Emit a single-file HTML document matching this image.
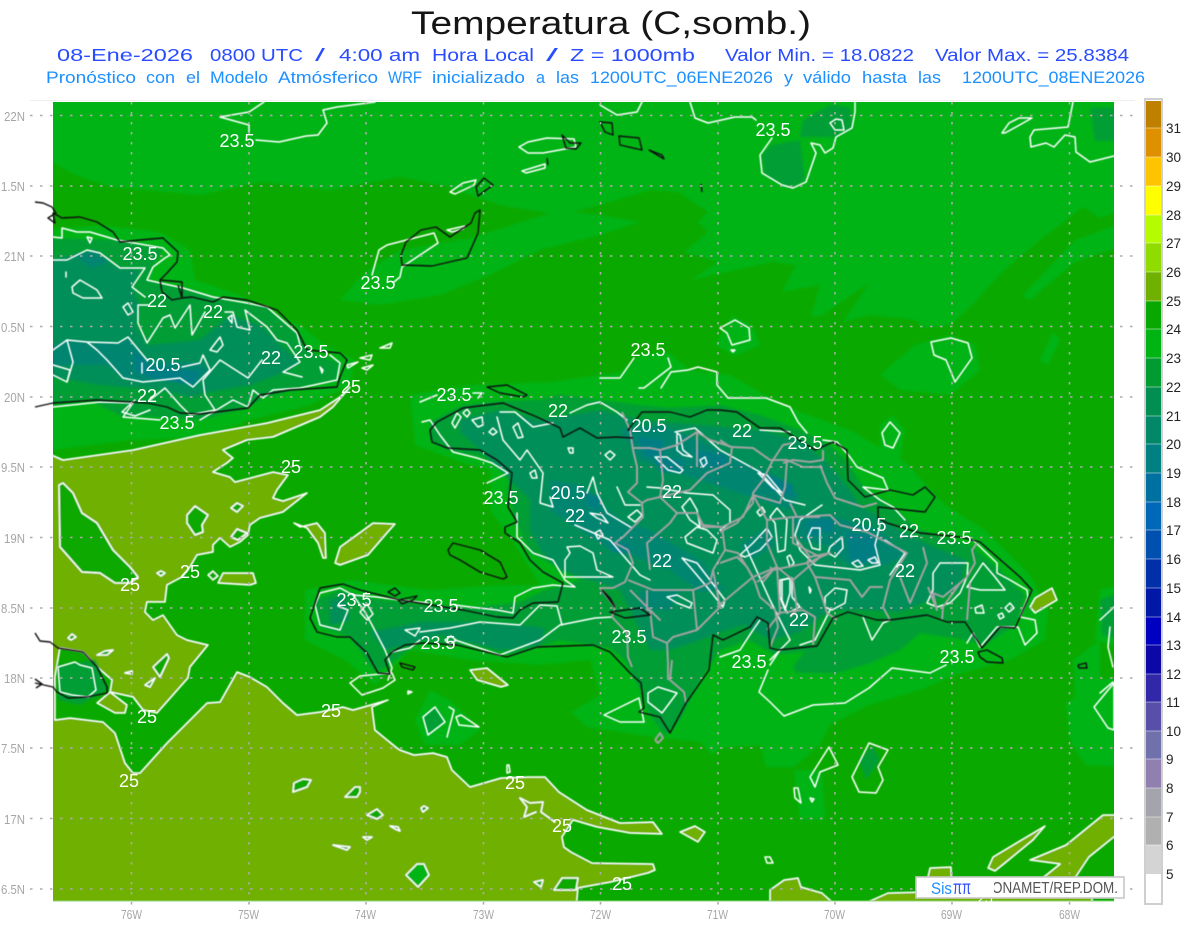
<!DOCTYPE html>
<html><head><meta charset="utf-8"><title>Temperatura</title>
<style>
html,body{margin:0;padding:0;background:#fff}
svg{display:block}
text{font-family:"Liberation Sans",sans-serif}
.w,.w polyline,.w polygon{fill:none;stroke:#fff;stroke-width:1.5;stroke-linejoin:round;stroke-linecap:round}
.k polyline,.k polygon{fill:none;stroke:#111;stroke-width:1.4;stroke-linejoin:round}
.g polyline{fill:none;stroke:#a2a2a2;stroke-width:2;stroke-linejoin:round}
.gn polygon{fill:#00b414;stroke:none}
.d1 polygon{fill:#009e36;stroke:none}
.d2 polygon{fill:#008f58;stroke:none}
.d3 polygon{fill:#008670;stroke:none}
.d4 polygon{fill:#007e84;stroke:none}
.ol polygon{fill:#70b000;stroke:#fff;stroke-width:1.5;stroke-linejoin:round}
.gb polygon{fill:#0aa900;stroke:#fff;stroke-width:1.5;stroke-linejoin:round}
.lb text{fill:#fff;font-size:18px;text-anchor:middle}
.ax text{fill:#a6a6a6;font-size:13px}
.cb text{fill:#222;font-size:13.5px}
</style></head><body>
<svg width="1200" height="927" viewBox="0 0 1200 927" xmlns="http://www.w3.org/2000/svg">
<defs>
<filter id="s" x="-3%" y="-3%" width="106%" height="106%"><feGaussianBlur stdDeviation="1.4"/></filter>
<filter id="t" x="-2%" y="-2%" width="104%" height="104%"><feGaussianBlur stdDeviation="0.4"/></filter>
<clipPath id="m"><rect x="53" y="102" width="1061" height="799"/></clipPath>
</defs>
<rect width="1200" height="927" fill="#fff"/>

<!-- titles -->
<text x="411" y="34" font-size="32" textLength="400" lengthAdjust="spacingAndGlyphs" fill="#151515">Temperatura  (C,somb.)</text>
<g font-size="17.5" fill="#2a4cff">
<text x="57" y="61" textLength="136" lengthAdjust="spacingAndGlyphs">08-Ene-2026</text>
<text x="210" y="61" textLength="93" lengthAdjust="spacingAndGlyphs">0800 UTC</text>
<text x="315" y="61" textLength="10" lengthAdjust="spacingAndGlyphs">/</text>
<text x="339" y="61" textLength="81" lengthAdjust="spacingAndGlyphs">4:00 am</text>
<text x="432" y="61" textLength="102" lengthAdjust="spacingAndGlyphs">Hora Local</text>
<text x="546" y="61" textLength="12" lengthAdjust="spacingAndGlyphs">/</text>
<text x="570" y="61" textLength="125" lengthAdjust="spacingAndGlyphs">Z = 1000mb</text>
<text x="725" y="61" textLength="189" lengthAdjust="spacingAndGlyphs">Valor Min. = 18.0822</text>
<text x="935" y="61" textLength="194" lengthAdjust="spacingAndGlyphs">Valor Max. = 25.8384</text>
</g>
<g font-size="16.5" fill="#1c90ff">
<text x="46" y="83" textLength="90" lengthAdjust="spacingAndGlyphs">Pronóstico</text>
<text x="146" y="83" textLength="29" lengthAdjust="spacingAndGlyphs">con</text>
<text x="186" y="83" textLength="14" lengthAdjust="spacingAndGlyphs">el</text>
<text x="210" y="83" textLength="58" lengthAdjust="spacingAndGlyphs">Modelo</text>
<text x="278" y="83" textLength="100" lengthAdjust="spacingAndGlyphs">Atmósferico</text>
<text x="388" y="83" textLength="34" lengthAdjust="spacingAndGlyphs">WRF</text>
<text x="432" y="83" textLength="93" lengthAdjust="spacingAndGlyphs">inicializado</text>
<text x="536" y="83" textLength="9" lengthAdjust="spacingAndGlyphs">a</text>
<text x="556" y="83" textLength="23" lengthAdjust="spacingAndGlyphs">las</text>
<text x="590" y="83" textLength="183" lengthAdjust="spacingAndGlyphs">1200UTC_06ENE2026</text>
<text x="784" y="83" textLength="9" lengthAdjust="spacingAndGlyphs">y</text>
<text x="803" y="83" textLength="48" lengthAdjust="spacingAndGlyphs">válido</text>
<text x="862" y="83" textLength="45" lengthAdjust="spacingAndGlyphs">hasta</text>
<text x="918" y="83" textLength="23" lengthAdjust="spacingAndGlyphs">las</text>
<text x="962" y="83" textLength="183" lengthAdjust="spacingAndGlyphs">1200UTC_08ENE2026</text>
</g>

<!-- map base -->
<rect x="30" y="100" width="1105" height="1" fill="#eeeeee"/>
<rect x="53" y="102" width="1061" height="799" fill="#0aa900"/>

<g clip-path="url(#m)">
<!-- lighter 23-24 regions -->
<g class="gn" filter="url(#s)">
<polygon points="40,90 1130,90 1130,208 1100,218 1083,207 1040,240 1002,272 972,305 951,325 921,328 917,320 870,315 843,322 869,283 823,315 811,317 820,285 782,292 796,265 772,262 691,280 718,262 684,252 708,232 698,222 708,212 678,192 650,190 600,205 560,215 500,205 440,185 400,177 330,190 260,182 200,195 110,187 75,175 40,155"/>
<polygon points="1125,245 1075,262 1030,300 1022,296 1075,240 1125,222"/>
<polygon points="340,300 365,272 400,250 470,238 560,210 600,215 640,222 600,235 540,250 490,275 440,295 380,305"/>
<polygon points="40,230 100,225 160,232 190,250 195,280 240,295 300,325 325,345 355,360 350,385 310,405 250,420 200,438 130,440 40,452"/>
<polygon points="410,395 470,385 550,382 620,372 640,355 668,352 690,370 730,375 765,395 800,412 850,430 905,462 945,505 985,530 1030,575 1048,610 1045,640 1010,660 955,675 920,690 869,705 830,725 820,745 794,767 766,767 761,745 723,748 700,762 712,755 700,742 653,737 587,727 571,712 600,695 590,660 540,665 470,660 410,650 375,685 345,660 305,640 305,590 350,580 430,590 500,585 540,585 515,545 490,510 490,470 460,462 415,445"/>
<polygon points="715,345 732,316 752,325 760,345 735,356"/>
<polygon points="880,425 892,415 905,430 900,460 880,462"/>
<polygon points="915,345 950,335 975,345 980,370 950,395 900,390 880,375"/>
<polygon points="794,770 822,770 825,820 800,820"/>
<polygon points="1066,703 1100,680 1125,675 1125,767 1085,765 1070,740"/>
<polygon points="1100,590 1125,585 1125,650 1095,640"/>
<polygon points="1073,660 1100,640 1100,700 1075,700"/>
<polygon points="1040,360 1053,332 1060,340 1048,365"/>
<polygon points="430,690 450,700 480,730 460,745 425,745 415,720"/>
</g>

<g filter="url(#t)">
<!-- olive main -->
<g class="ol">
<polygon points="40,450 63,460 133,450 200,435 267,423 320,410 340,397 350,387 333,407 320,417 273,437 247,440 223,450 233,458 227,463 213,472 230,477 235,482 273,472 288,475 277,490 273,498 283,501 307,493 283,512 260,518 250,525 248,535 240,542 230,547 220,538 213,545 213,552 197,555 190,567 182,577 167,585 165,602 147,602 145,612 153,620 163,615 177,635 187,640 208,645 190,667 188,678 157,713 143,710 133,697 110,692 112,680 97,667 83,652 60,648 55,677 55,720 70,718 103,722 115,733 125,763 133,773 140,773 167,743 207,703 220,702 237,672 250,677 267,687 283,703 297,715 320,712 343,707 353,710 388,700 372,707 375,730 397,748 400,750 414,755 433,753 447,757 452,770 470,787 501,778 529,777 545,777 559,792 587,810 620,823 653,822 662,834 630,833 597,827 573,820 562,837 564,847 571,852 592,863 653,864 655,870 648,873 611,882 578,888 576,910 40,910"/>
<polygon points="218,583 223,573 253,573 256,583 250,585"/>
<polygon points="335,563 340,547 373,523 395,524 387,533 368,555 340,565"/>
<polygon points="294,523 300,527 317,523 325,533 326,558 323,558 318,543 307,528"/>
<polygon points="97,703 110,692 127,705 125,713 115,713"/>
<polygon points="988,868 993,857 1045,826 1033,840 1005,863 995,871"/>
<polygon points="1030,860 1066,845 1103,815 1125,815 1125,828 1089,857 1075,878 1085,910 1020,910 1040,880 1060,864"/>
<polygon points="770,890 784,880 798,878 801,887 822,893 841,910 770,910"/>
<polygon points="850,910 888,893 925,892 1090,892 1095,910"/>
<polygon points="925,890 930,868 951,867 952,890"/>
<polygon points="1030,607 1035,598 1052,588 1057,600 1035,613"/>
<polygon points="470,670 487,668 508,685 501,687 477,680"/>
<polygon points="680,832 695,826 705,832 698,842"/>
</g>
<polyline class="w" points="520,798 530,803 543,802 541,812 555,822"/>
<polyline class="w" points="520,798 527,807 524,817 536,812"/>

<!-- green blobs inside olive -->
<g class="gb">
<polygon points="59,485 63,483 73,493 82,513 97,523 113,550 130,567 138,577 130,583 115,583 100,573 82,572 68,556 60,547"/>
<polygon points="187,515 195,506 208,515 202,525 203,532 195,535 187,523"/>
<polygon points="231,508 237,503 243,506 237,512"/>
<polygon points="231,537 237,529 247,533 238,540"/>
<polygon points="157,573 161,571 165,573 161,576"/>
<polygon points="208,575 213,571 218,576 213,580"/>
<polygon points="68,638 72,634 76,637 71,640"/>
<polygon points="97,655 105,651 113,650 107,655"/>
<polygon points="125,673 132,671 132,674"/>
<polygon points="145,685 155,678 150,687"/>
<polygon points="153,667 167,654 169,658 160,677"/>
<polygon points="294,783 303,779 311,780 307,787 293,792"/>
<polygon points="345,797 355,787 360,787 360,792 357,797"/>
<polygon points="367,815 377,809 383,815 377,819"/>
<polygon points="421,808 424,806 428,808 423,812"/>
<polygon points="390,826 398,827 400,831 395,829"/>
<polygon points="363,837 372,837 367,840"/>
<polygon points="333,845 350,847 347,850"/>
<polygon points="406,875 417,864 424,864 429,875 418,887" style="fill:#00b414"/>
<polygon points="534,882 543,880 541,887"/>
<polygon points="554,890 562,878 578,878 576,890"/>
</g>
</g>

<!-- misc dark patches -->
<g class="d1" filter="url(#s)">
<polygon points="772,145 800,140 805,180 790,188 765,175 762,155"/>
<polygon points="803,120 830,105 850,107 852,128 835,137 800,137"/>
<polygon points="1090,108 1125,107 1125,141 1095,141"/>
<polygon points="793,667 813,640 833,620 860,617 920,620 920,633 900,650 870,663 837,673 797,673"/>
<polygon points="423,717 435,707 445,722 428,735"/>
<polygon points="859,760 873,745 880,760 866,780"/>
<polygon points="1100,600 1125,590 1125,640 1102,635"/>
<polygon points="58,665 95,660 108,690 80,705 58,700"/>
<polygon points="648,693 658,687 677,693 662,713 648,702"/>
<polygon points="315,600 340,590 380,600 420,604 470,608 520,602 545,590 580,580 530,552 516,522 507,490 510,472 480,456 450,451 430,441 430,422 463,405 503,401 540,400 560,395 600,400 640,405 670,408 720,405 760,415 800,430 830,445 850,465 865,490 890,505 920,530 970,545 1000,570 1025,595 1015,625 985,645 965,640 900,630 880,630 860,625 840,625 815,650 775,655 750,640 720,650 700,680 680,720 665,735 650,715 640,690 625,660 610,648 560,640 510,655 470,645 420,642 385,668 375,672 350,637 320,627"/>
<polygon points="40,238 117,240 163,248 153,267 147,280 183,288 213,297 247,303 267,307 297,333 310,352 340,363 337,380 300,388 263,398 248,407 200,420 140,416 123,417 90,400 40,407"/>
</g>

<g class="d2" filter="url(#s)">
<polygon points="40,262 87,252 120,268 140,270 132,287 140,305 135,325 147,345 200,340 230,315 260,325 280,345 300,362 285,372 250,385 210,392 190,397 160,390 100,385 40,375"/>
<polygon points="460,420 500,410 540,420 600,410 640,420 700,425 760,430 800,440 830,465 850,490 860,505 900,530 930,545 965,560 960,590 930,600 900,612 870,610 830,610 800,632 770,640 745,625 720,632 700,640 670,650 650,650 635,620 620,590 590,580 560,570 540,550 530,530 530,500 510,480 480,450 460,432"/>
<polygon points="370,632 420,622 470,622 520,625 545,628 540,645 500,650 440,635 385,650"/>
<polygon points="330,600 345,595 350,620 330,625"/>
</g>

<g class="d3" filter="url(#s)">
<polygon points="40,350 67,340 87,342 118,343 128,337 147,360 200,363 210,370 193,387 180,378 143,382 123,378 107,365 70,365 40,367"/>
<polygon points="75,255 95,250 110,262 90,268"/>
<polygon points="620,430 660,425 700,440 760,470 800,495 790,510 760,500 700,480 670,470 640,460"/>
<polygon points="550,480 580,485 620,520 650,530 700,560 725,590 700,592 670,570 630,555 610,550 580,530 550,510"/>
<polygon points="790,515 830,515 880,530 905,555 885,565 850,565 825,545 800,540"/>
<polygon points="740,545 770,525 775,545 750,560"/>
<polygon points="640,590 680,590 670,610 640,610"/>
</g>

<g class="d4" filter="url(#s)">
<polygon points="133,350 150,365 200,372 193,385 150,378 135,370"/>
<polygon points="637,437 663,440 663,457 645,457"/>
<polygon points="653,457 683,460 683,473 660,472"/>
<polygon points="693,450 727,455 727,467 700,467"/>
<polygon points="760,470 793,485 793,497 770,490"/>
<polygon points="587,493 600,497 600,510 588,505"/>
<polygon points="610,540 630,545 630,553 612,552"/>
<polygon points="813,517 833,520 833,533 815,530"/>
<polygon points="847,533 877,535 877,563 850,560"/>
<polygon points="807,520 820,525 820,537 808,535"/>
</g>

<g filter="url(#t)">
<!-- white contours -->
<g class="w">
<polyline points="264,102 249,112 220,117 249,125 249,132"/>
<polyline points="256,140 279,142 306,136 318,135 327,123 323,110 337,107 375,102"/>
<polygon points="519,147 528,142 547,138 574,139 576,147 543,153 528,153"/>
<polygon points="522,171 545,164 545,168 526,173"/>
<polygon points="450,192 463,183 476,180 474,185 455,194"/>
<polygon points="447,230 465,226 463,229 452,232"/>
<polyline points="372,275 379,250 387,245 434,233 438,243 402,267 400,277 394,282"/>
<polyline points="690,102 695,118 708,123 735,117 752,117 756,120"/>
<polyline points="772,138 760,155 762,173 782,185 793,188 806,182 816,153 811,143 820,145 825,153 833,148 836,137 852,128 855,112 855,102"/>
<polygon points="830,123 836,119 842,120 844,130 835,130"/>
<polygon points="1002,133 1009,123 1019,118 1032,118 1016,127 1005,133"/>
<polyline points="1073,102 1068,127 1034,130 1030,137 1031,147 1046,143 1054,147 1065,135 1075,137 1076,152 1090,162 1114,156"/>
<polyline points="600,105 617,115 637,112 642,102"/>
<polygon points="931,342 951,338 968,343 972,358 955,382 951,372 946,360 934,355"/>
<polygon points="720,328 735,320 749,328 750,340 732,345 727,333"/>
<polygon points="731,350 735,350 733,352"/>
<polygon points="882,433 890,422 900,433 893,448 885,445"/>

<!-- Cuba 23.5 -->
<polyline points="53,237 62,238 62,228 77,232 90,232 117,240 163,248 170,255 165,258 153,267 147,280 183,288 213,297 247,303 267,307 297,333 300,345"/>
<polyline points="330,355 340,363 337,380 300,388 273,390 263,398 253,390 248,407 233,400 200,420"/>
<polyline points="160,420 123,417 133,403 100,402 53,407"/>
<!-- Cuba 22 -->
<polyline points="53,260 67,260 87,250 100,253 120,268 145,268 132,287 145,297"/>
<polyline points="148,305 138,305 138,323 147,343 163,318 170,315 175,328 190,305 192,335 205,312"/>
<polyline points="225,312 233,312 237,327 250,330 245,310 267,327 277,340 287,343 300,362 283,372 302,377"/>
<polyline points="262,360 248,378 220,360 203,380 205,395 215,410 190,415 180,405 165,388 150,400"/>
<polyline points="135,400 122,412 135,416 150,410"/>
<polyline points="53,365 70,370 67,382 53,375"/>
<polyline points="67,340 73,362 67,382"/>
<!-- Cuba 20.5 -->
<polyline points="53,350 67,340 87,342 118,343 128,337 147,360"/>
<polyline points="182,367 200,363 203,355 210,370 193,387 180,378 143,382 123,378 107,360 97,350 87,342"/>
<polygon points="72,287 80,280 97,290 102,298 83,298 73,293"/>
<polygon points="123,307 128,303 133,312 128,315"/>
<polygon points="87,237 92,238 90,243"/>
<polygon points="210,350 220,337 223,345 217,352"/>
<polygon points="228,318 232,315 232,323"/>
<polygon points="320,367 323,370 322,373"/>
<polyline points="142,363 142,373"/>
<polyline points="66,272 66,277"/>
<polygon points="380,348 392,343 390,348"/>
<polygon points="360,358 372,355 370,360"/>
<polygon points="362,368 373,365 367,370"/>
<polygon points="347,365 358,362 348,368"/>

<!-- Hispaniola outer -->
<polyline points="420,402 437,395"/>
<polyline points="473,393 482,393 478,398"/>
<polyline points="634,358 620,378 600,378"/>
<polyline points="668,358 671,367 644,388 639,388"/>
<polyline points="661,388 671,372 688,370 698,367 717,372 717,385 728,398 766,398 790,407 798,422 807,433"/>
<polyline points="823,440 837,442 850,457 857,467 883,478 888,490 863,487 880,500 893,507 905,520"/>
<polyline points="973,540 997,563 997,573 1010,580 1027,590 1028,597 1020,617 1035,620 1037,633 1025,645 1018,627 997,627 980,647 973,633 967,643"/>
<polyline points="863,617 872,640 883,623 890,620"/>
<polyline points="768,670 759,692 770,702 784,716 813,705 845,703 869,688 892,668 930,673 946,665"/>
<polyline points="720,657 740,650 753,630 760,620"/>
<polyline points="770,665 780,650"/>
<polyline points="422,422 430,420 440,435 453,452 477,458 492,463 508,473 487,483"/>
<polyline points="517,513 517,527 517,537 533,553 553,560 565,580 575,587 553,585 533,588 515,597 513,613 497,610 470,607 455,605"/>
<polyline points="428,603 400,600 377,597 353,595 340,588 320,593 315,605 320,625 340,630 348,610 338,606"/>
<polyline points="353,595 365,612 372,625 385,650 392,668 388,680"/>
<polyline points="392,652 410,648 420,640"/>
<polyline points="455,640 500,655 540,640"/>
<polyline points="540,640 560,625 595,618 612,617"/>
<polyline points="420,632 450,628 480,622 520,625 540,605 557,606 562,625"/>
<!-- 22 contours -->
<polyline points="500,412 515,412 533,427 553,423"/>
<polyline points="570,413 587,405 600,402 617,412 627,420"/>
<polyline points="497,417 503,440 520,460 527,450 543,473 540,503 553,507 550,497"/>
<polyline points="587,493 593,477 597,493 607,513 632,528"/>
<polyline points="617,487 625,505 640,505"/>
<polyline points="575,525 610,540 640,575 650,580"/>
<polyline points="675,432 695,428 720,450 760,472 785,500 805,505"/>
<polyline points="760,430 790,432"/>
<polygon points="452,423 457,413 461,417 455,428"/>
<polygon points="472,420 482,417 483,425 478,427"/>
<polygon points="463,413 467,409 470,413 467,417"/>
<polygon points="489,432 493,428 497,432 493,435"/>
<polygon points="513,427 518,423 523,437 518,438"/>
<polygon points="605,455 610,451 615,455 610,460"/>
<polygon points="530,473 535,470 537,478 532,478"/>
<polygon points="568,448 573,448 573,453 570,453"/>
<polygon points="595,533 600,530 603,535 598,539"/>
<polygon points="628,517 637,510 642,515 635,522"/>
<polygon points="677,433 680,435 683,450 692,457 683,455 677,450"/>
<polygon points="655,457 667,457 683,470 680,473 668,470"/>
<polygon points="700,460 705,457 707,463 703,467"/>
<polygon points="590,513 602,515 608,523 597,518"/>
<polygon points="758,473 767,475 782,493 773,488"/>
<polygon points="757,512 762,507 765,512 760,516"/>
<polygon points="770,517 777,508 787,520 785,550 778,552 775,523"/>
<polygon points="740,555 753,543 767,528 772,537 760,550 745,557"/>
<polygon points="787,557 790,555 794,563 790,567"/>
<polygon points="667,597 677,595 692,603 690,608 677,603"/>
<polygon points="682,558 697,563 710,580 725,600 723,607 707,587 690,567"/>
<polygon points="565,577 565,560 570,553 567,547 580,546 593,553 597,570 613,577 587,577"/>
<polygon points="685,537 697,527 707,530 717,540 713,553 700,548 687,543"/>
<polygon points="682,507 690,498 697,510 700,527 690,520"/>
<polyline points="647,487 660,488 687,493 713,495 730,510 730,523 720,530"/>
<polygon points="780,580 790,578 790,593 785,610 780,597"/>
<polygon points="812,528 820,528 820,550 812,548 808,537"/>
<polygon points="830,547 842,537 843,548 835,557 828,553"/>
<polygon points="852,563 858,560 863,566 857,567"/>
<polygon points="868,560 875,557 878,563 872,563"/>
<polyline points="822,505 800,520 795,535 800,550 815,565 860,570 880,565 875,545 880,525"/>
<polyline points="885,540 905,553 890,575"/>
<polygon points="940,563 968,563 967,577 960,593 950,603 937,607 927,603 933,590 933,573"/>
<polygon points="967,587 983,563 995,577 1005,590 980,590"/>
<polygon points="975,608 982,605 984,613 976,613"/>
<polygon points="1005,608 1010,603 1014,608 1009,612"/>
<polygon points="998,615 1002,613 1004,617 1000,619"/>
<polygon points="782,580 792,578 792,597 800,607 787,613 782,600"/>
<polygon points="825,597 835,588 847,590 845,603 832,610 825,607"/>
<polygon points="809,587 811,590 810,593"/>
<polyline points="745,545 770,600 790,640 770,660"/>
<polyline points="830,610 815,640 800,645"/>
<polygon points="604,715 639,698 644,722 620,722"/>
<polygon points="648,693 658,687 677,693 662,713 648,702"/>
<polygon points="360,612 367,604 373,614 367,620"/>
<polygon points="445,640 451,636 456,640 450,645"/>
<polygon points="405,630 420,628 415,636"/>
<polygon points="350,683 360,676 392,673 395,680 383,688 362,695"/>
<polygon points="423,717 435,707 445,722 428,735"/>
<polygon points="456,717 461,715 479,727 459,725"/>
<polyline points="447,737 454,710 449,707"/>
<polygon points="408,691 412,692 408,694"/>
<polygon points="507,765 509,765 510,772 507,773"/>
<polygon points="810,777 829,747 838,765 820,772 815,787"/>
<polygon points="852,777 869,743 888,750 878,767 883,780 876,793 859,792"/>
<polygon points="794,788 798,788 801,803 795,798"/>
<polygon points="810,798 814,799 812,802"/>
<polygon points="765,857 770,857 773,863 767,863"/>
<polygon points="1094,707 1114,683 1114,730 1108,728"/>
<polyline points="1114,607 1100,620"/>
<polyline points="1110,627 1108,647 1113,667"/>
<polyline points="1100,693 1113,682"/>
<polygon points="58,667 75,662 80,665 92,668 96,690 88,697 72,695 60,692"/>
</g>

<!-- gray provinces -->
<g class="g">
<polyline points="622,412 630,430 633,450 637,467 637,483 628,492 642,503 643,517 633,527 623,537 615,543 628,550 633,563 625,582 613,588 600,588 615,607 612,617 627,633 628,657 632,667"/>
<polyline points="633,448 650,448 660,450 663,480 660,497 647,500 642,503"/>
<polyline points="660,450 677,445 697,432 710,440 732,447 730,463 707,473 690,490 660,497"/>
<polyline points="697,430 697,467"/>
<polyline points="732,447 753,448 770,460 787,460 803,467 820,467"/>
<polyline points="787,460 785,487 780,503 753,495 743,517 722,527 703,525 697,513 677,513 660,497"/>
<polyline points="677,513 697,513 703,527 722,527 725,550 713,570 710,583 693,590 653,590 628,580"/>
<polyline points="647,590 647,610 650,610 653,637 667,643 668,663 668,680"/>
<polyline points="650,570 647,543 670,523 677,513"/>
<polyline points="693,590 697,630 673,637 667,643"/>
<polyline points="713,570 720,607 697,630"/>
<polyline points="717,607 753,577 777,567 767,543 767,520 753,495"/>
<polyline points="753,577 738,553 725,550"/>
<polyline points="777,567 780,613 767,630"/>
<polyline points="767,520 793,517 820,517"/>
<polyline points="793,517 793,543 820,557 793,580 777,567"/>
<polyline points="793,580 797,610 790,617"/>
<polyline points="720,532 737,523 753,503 753,493 763,480 773,460 783,445 793,443"/>
<polyline points="783,463 793,460 810,462 823,460 823,450"/>
<polyline points="820,465 827,483 835,498 863,507 877,503"/>
<polyline points="790,503 797,517 830,515 840,525 867,532 907,553 890,580 883,607 890,620"/>
<polyline points="795,537 810,557 807,563 773,570 763,582"/>
<polyline points="810,557 830,553 807,563"/>
<polyline points="807,563 815,577 823,600 827,613 837,620"/>
<polyline points="815,577 850,580 862,597 870,587 883,587"/>
<polyline points="900,577 910,603 927,563 923,547"/>
<polyline points="928,587 937,610 933,593 943,597 960,583 967,577 975,563 972,550 977,543"/>
<polyline points="960,583 943,607 942,620"/>
<polyline points="970,583 967,620"/>
<polyline points="720,563 737,557 747,567 755,582 760,597 775,610 778,627 770,647"/>
<polyline points="770,567 773,570 757,582"/>
<polyline points="778,613 803,610 815,617 813,645"/>
<polyline points="720,440 730,447"/>
<polyline points="672,660 670,680 684,692 686,703"/>
<polyline points="655,740 660,733 663,738 658,743 655,740"/>
<polyline points="630,590 660,620 650,610"/>
</g>
</g>
</g>

<!-- black coast (extends slightly outside the map) -->
<g class="k" filter="url(#t)">
<polyline points="35,202 43,203 52,207 56,213 48,218 55,223 53,213 62,218 80,217 97,222 113,232 120,242 140,240 163,238 178,252 177,262 167,273 160,280 182,282 182,298 192,297 213,302 223,297 247,300 277,310 297,330 307,350 340,353 347,360 340,377 337,387 290,390 260,395 248,408 200,414 180,413 167,407 147,403 97,400 53,403 35,407"/>
<polyline points="160,280 162,292 172,300 182,298 178,285"/>
<polyline points="35,633 40,641 50,642 58,648 83,652 97,667 107,687 107,693 87,697 68,698 57,692 53,687 35,683"/>
<polyline points="35,679 42,684 36,688"/>
<polyline points="630,430 628,430 642,412 670,412 690,417 707,410 720,410 737,412 760,428 780,428 815,450 833,442 847,450 848,480 865,497 890,490 913,495 925,487 935,497 925,512 878,507 878,518 887,523 920,533 960,537 980,542 1020,577 1032,590 1020,617 1015,628 1000,627 982,648 977,640 965,622 947,622 927,615 890,620 877,620 848,612 833,618 817,646 778,650 770,648 768,623 757,617 750,627 723,640 713,635 709,670 686,703 670,733 660,717 639,712 644,708 641,683 630,673 610,652 593,645 537,647 507,657 457,645 422,643 423,643 405,645 392,652 385,660 390,674 378,673 367,653 350,637 337,637 317,632 310,618 315,603 320,588 343,584 360,590 400,600 463,610 497,617 513,618 520,610 533,603 558,602 563,583 543,572 530,560 520,543 505,533 505,527 517,522 508,507 510,490 512,473 497,460 480,450 447,448 432,442 430,430 437,422 463,408 503,403 537,417 560,428 563,437 580,428 597,438 617,437 633,438"/>
<polygon points="978,652 987,650 1002,658 1003,663 987,662 980,657"/>
<polygon points="487,387 507,385 527,395 523,397 500,393"/>
<polygon points="448,550 453,543 480,550 500,562 507,577 503,579 480,572 460,560 450,555"/>
<polygon points="480,210 478,233 467,258 432,266 402,265 401,255 406,242 421,230 436,227 450,237 471,223 475,213"/>
<polygon points="476,187 484,178 493,185 478,196"/>
<polygon points="600,122 612,123 613,135 605,132"/>
<polygon points="619,136 639,138 642,150 620,145"/>
<polygon points="649,150 662,155 664,159"/>
<polyline points="701,184 702,192"/>
<polyline points="547,158 548,165"/>
<polygon points="562,135 570,143 581,143 576,149 566,148"/>
<polygon points="1078,665 1086,663 1087,668 1079,668"/>
<polygon points="388,592 395,588 400,593 395,596"/>
<polygon points="398,600 417,596 413,600 402,604"/>
<polygon points="400,663 415,667 413,670 402,667"/>
<polygon points="602,590 610,598 615,607"/>
<polygon points="610,612 640,608 650,615 625,618"/>
</g>

<!-- grid -->
<g stroke="#ababab" stroke-width="1.6" stroke-dasharray="2.5 7.5" fill="none">
<path d="M30 115.5H1135M30 186H1135M30 256H1135M30 326.5H1135M30 397H1135M30 467H1135M30 537.5H1135M30 608H1135M30 678H1135M30 748H1135M30 818.5H1135M30 889H1135"/>
<path d="M131.5 102V907M249 102V907M366 102V907M483.5 102V907M600.5 102V907M718 102V907M835 102V907M952 102V907M1069.5 102V907"/>
</g>
<rect x="53" y="900.5" width="1061" height="1" fill="#8fd47a"/>

<!-- contour labels -->
<g class="lb">
<text x="237" y="147">23.5</text><text x="773" y="136">23.5</text><text x="378" y="289">23.5</text><text x="140" y="260">23.5</text><text x="311" y="358">23.5</text><text x="177" y="429">23.5</text><text x="454" y="401">23.5</text><text x="648" y="356">23.5</text><text x="501" y="504">23.5</text><text x="805" y="449">23.5</text><text x="954" y="544">23.5</text><text x="354" y="606">23.5</text><text x="441" y="612">23.5</text><text x="438" y="649">23.5</text><text x="629" y="643">23.5</text><text x="749" y="668">23.5</text><text x="957" y="663">23.5</text>
<text x="163" y="371">20.5</text><text x="649" y="432">20.5</text><text x="568" y="499">20.5</text><text x="869" y="531">20.5</text>
<text x="157" y="307">22</text><text x="213" y="318">22</text><text x="271" y="364">22</text><text x="147" y="402">22</text><text x="558" y="417">22</text><text x="742" y="437">22</text><text x="575" y="522">22</text><text x="672" y="498">22</text><text x="662" y="567">22</text><text x="909" y="537">22</text><text x="905" y="577">22</text><text x="799" y="626">22</text>
<text x="351" y="393">25</text><text x="291" y="473">25</text><text x="130" y="591">25</text><text x="190" y="578">25</text><text x="147" y="723">25</text><text x="129" y="787">25</text><text x="331" y="717">25</text><text x="515" y="789">25</text><text x="562" y="832">25</text><text x="622" y="890">25</text>
</g>

<!-- axis labels -->
<g class="ax">
<text x="4" y="121" textLength="21" lengthAdjust="spacingAndGlyphs">22N</text>
<text x="1" y="191" textLength="24" lengthAdjust="spacingAndGlyphs">1.5N</text>
<text x="4" y="261" textLength="21" lengthAdjust="spacingAndGlyphs">21N</text>
<text x="1" y="332" textLength="24" lengthAdjust="spacingAndGlyphs">0.5N</text>
<text x="4" y="402" textLength="21" lengthAdjust="spacingAndGlyphs">20N</text>
<text x="1" y="472" textLength="24" lengthAdjust="spacingAndGlyphs">9.5N</text>
<text x="4" y="543" textLength="21" lengthAdjust="spacingAndGlyphs">19N</text>
<text x="1" y="613" textLength="24" lengthAdjust="spacingAndGlyphs">8.5N</text>
<text x="4" y="683" textLength="21" lengthAdjust="spacingAndGlyphs">18N</text>
<text x="1" y="753" textLength="24" lengthAdjust="spacingAndGlyphs">7.5N</text>
<text x="4" y="824" textLength="21" lengthAdjust="spacingAndGlyphs">17N</text>
<text x="1" y="894" textLength="24" lengthAdjust="spacingAndGlyphs">6.5N</text>
<text x="121" y="919" textLength="21" lengthAdjust="spacingAndGlyphs">76W</text>
<text x="238" y="919" textLength="21" lengthAdjust="spacingAndGlyphs">75W</text>
<text x="355" y="919" textLength="21" lengthAdjust="spacingAndGlyphs">74W</text>
<text x="473" y="919" textLength="21" lengthAdjust="spacingAndGlyphs">73W</text>
<text x="590" y="919" textLength="21" lengthAdjust="spacingAndGlyphs">72W</text>
<text x="707" y="919" textLength="21" lengthAdjust="spacingAndGlyphs">71W</text>
<text x="824" y="919" textLength="21" lengthAdjust="spacingAndGlyphs">70W</text>
<text x="941" y="919" textLength="21" lengthAdjust="spacingAndGlyphs">69W</text>
<text x="1059" y="919" textLength="21" lengthAdjust="spacingAndGlyphs">68W</text>
</g>

<!-- footer box -->
<text x="985" y="903" font-size="14" fill="#fff" text-anchor="middle">25</text>
<rect x="916" y="877" width="208" height="21" fill="#fff" stroke="#c8c8c8" stroke-width="1.6"/>
<text x="931" y="894" font-size="17" textLength="21" lengthAdjust="spacingAndGlyphs" fill="#1c90ff">Sis</text>
<text x="953" y="894" font-size="19" textLength="18" lengthAdjust="spacingAndGlyphs" fill="#2a4cff">ππ</text>
<text x="992" y="893" font-size="16" textLength="126" lengthAdjust="spacingAndGlyphs" fill="#555">ONAMET/REP.DOM.</text>
<rect x="985" y="879" width="9" height="17" fill="#fff"/>

<!-- colour bar -->
<rect x="1145" y="99" width="17" height="805" fill="#fff" stroke="#cfcfcf" stroke-width="2"/>
<g>
<rect x="1146" y="101" width="15" height="27" fill="#bf8000"/>
<rect x="1146" y="128" width="15" height="29" fill="#de9000"/>
<rect x="1146" y="157" width="15" height="29" fill="#ffc400"/>
<rect x="1146" y="186" width="15" height="29" fill="#ffff00"/>
<rect x="1146" y="215" width="15" height="28" fill="#b6fc00"/>
<rect x="1146" y="243" width="15" height="29" fill="#90dc00"/>
<rect x="1146" y="272" width="15" height="29" fill="#70b000"/>
<rect x="1146" y="301" width="15" height="28" fill="#08a800"/>
<rect x="1146" y="329" width="15" height="29" fill="#00b414"/>
<rect x="1146" y="358" width="15" height="29" fill="#009c32"/>
<rect x="1146" y="387" width="15" height="29" fill="#008f50"/>
<rect x="1146" y="416" width="15" height="28" fill="#008868"/>
<rect x="1146" y="444" width="15" height="29" fill="#008080"/>
<rect x="1146" y="473" width="15" height="29" fill="#0070a0"/>
<rect x="1146" y="502" width="15" height="28" fill="#0068b8"/>
<rect x="1146" y="530" width="15" height="29" fill="#0050b0"/>
<rect x="1146" y="559" width="15" height="29" fill="#0030a8"/>
<rect x="1146" y="588" width="15" height="29" fill="#0018a8"/>
<rect x="1146" y="617" width="15" height="28" fill="#0000c0"/>
<rect x="1146" y="645" width="15" height="29" fill="#0c08a8"/>
<rect x="1146" y="674" width="15" height="28" fill="#3028a8"/>
<rect x="1146" y="702" width="15" height="29" fill="#5850a8"/>
<rect x="1146" y="731" width="15" height="28" fill="#7070ac"/>
<rect x="1146" y="759" width="15" height="29" fill="#9080b0"/>
<rect x="1146" y="788" width="15" height="29" fill="#a4a4ac"/>
<rect x="1146" y="817" width="15" height="28" fill="#b0b0b0"/>
<rect x="1146" y="845" width="15" height="29" fill="#d4d4d4"/>
</g>
<g stroke="#fff" stroke-opacity=".45" stroke-width="1">
<path d="M1146 128H1161M1146 157H1161M1146 186H1161M1146 215H1161M1146 243H1161M1146 272H1161M1146 301H1161M1146 329H1161M1146 358H1161M1146 387H1161M1146 416H1161M1146 444H1161M1146 473H1161M1146 502H1161M1146 530H1161M1146 559H1161M1146 588H1161M1146 617H1161M1146 645H1161M1146 674H1161M1146 702H1161M1146 731H1161M1146 759H1161M1146 788H1161M1146 817H1161M1146 845H1161"/>
</g>
<g class="cb">
<text x="1166" y="133">31</text><text x="1166" y="162">30</text><text x="1166" y="191">29</text><text x="1166" y="220">28</text><text x="1166" y="248">27</text><text x="1166" y="277">26</text><text x="1166" y="306">25</text><text x="1166" y="334">24</text><text x="1166" y="363">23</text><text x="1166" y="392">22</text><text x="1166" y="421">21</text><text x="1166" y="449">20</text><text x="1166" y="478">19</text><text x="1166" y="507">18</text><text x="1166" y="535">17</text><text x="1166" y="564">16</text><text x="1166" y="593">15</text><text x="1166" y="622">14</text><text x="1166" y="650">13</text><text x="1166" y="679">12</text><text x="1166" y="707">11</text><text x="1166" y="736">10</text><text x="1166" y="764">9</text><text x="1166" y="793">8</text><text x="1166" y="822">7</text><text x="1166" y="850">6</text><text x="1166" y="879">5</text>
</g>
</svg>
</body></html>
